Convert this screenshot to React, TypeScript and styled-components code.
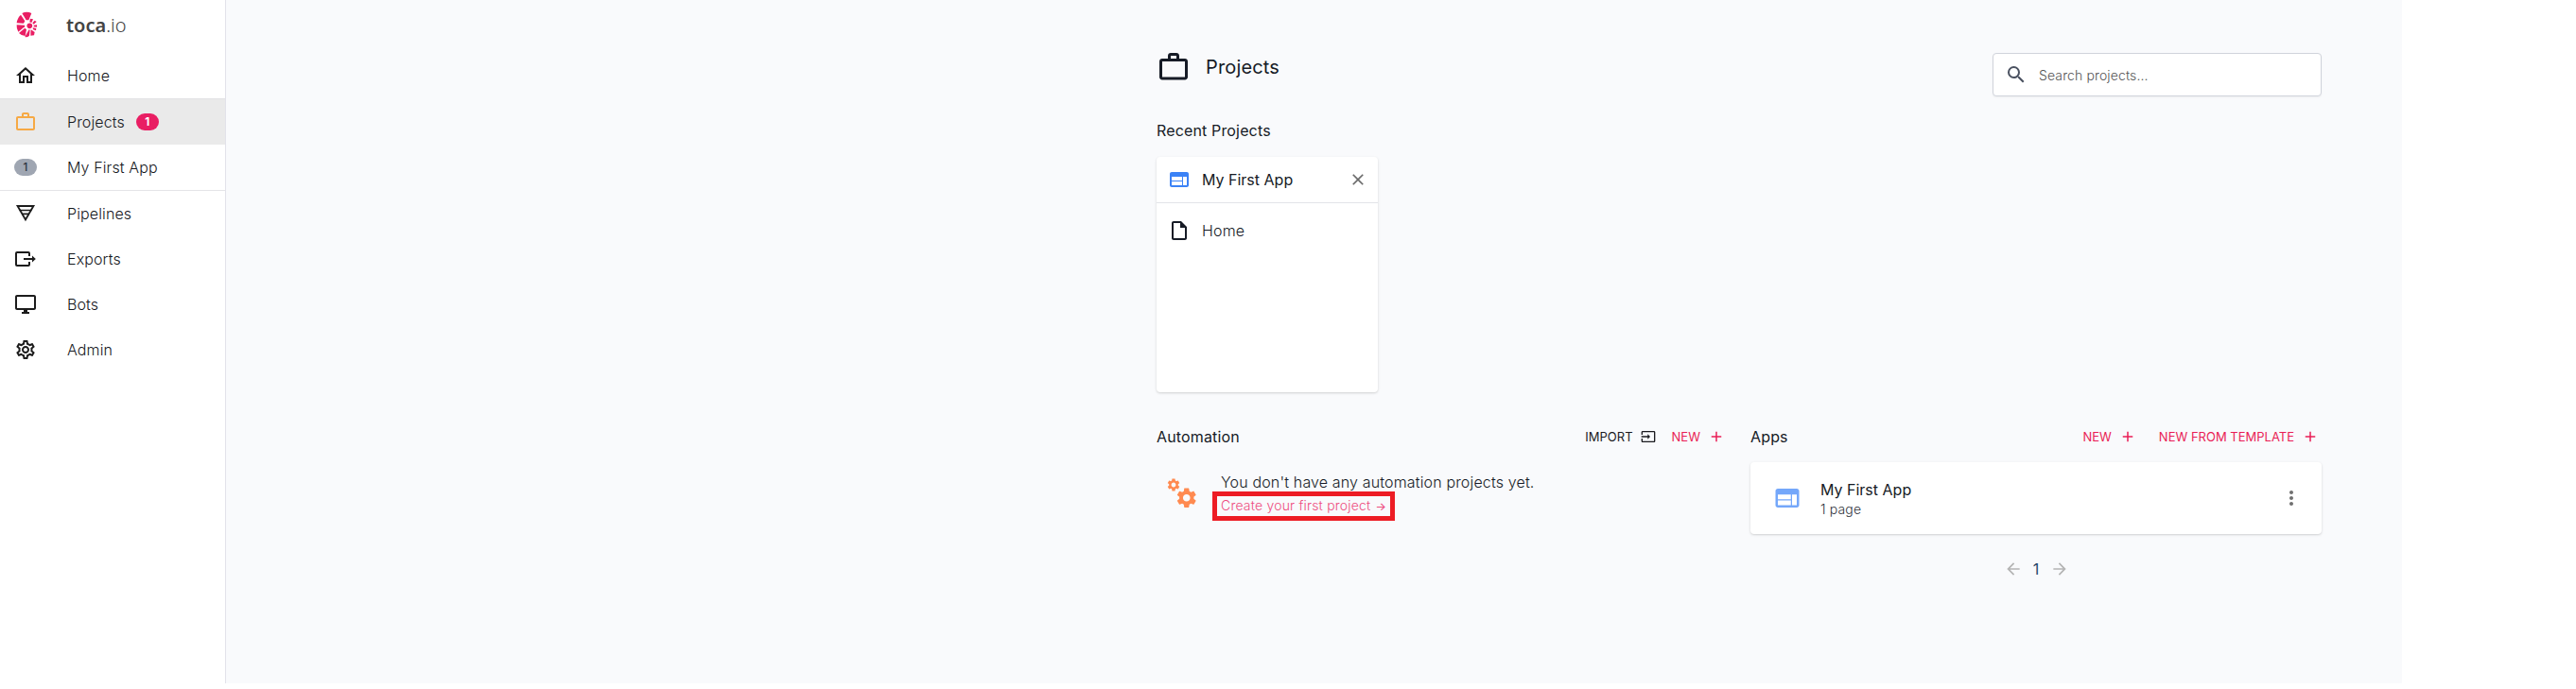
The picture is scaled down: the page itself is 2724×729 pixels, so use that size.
import React from "react";
import styled, { createGlobalStyle } from "styled-components";
import {
  MdAdd,
  MdArrowBack,
  MdArrowForward,
  MdClose,
  MdInput,
  MdMoreVert,
  MdOutlineDesktopWindows,
  MdOutlineInsertDriveFile,
  MdOutlineSettings,
  MdSearch,
  MdSettings,
  MdWeb,
  MdWorkOutline,
} from "react-icons/md";

const GlobalStyle = createGlobalStyle`
  *, *::before, *::after { box-sizing: border-box; }
  body {
    margin: 0;
    background: #fff;
    color: #161b26;
    font-family: "Inter", "Liberation Sans", sans-serif;
    font-size: 16px;
    line-height: 24px;
    letter-spacing: 0.15px;
  }
  svg { display: block; flex: none; }
`;

const Shell = styled.div`
  display: flex;
  width: 2540px;
  height: 723px;
  background: #f9fafc;
`;

const Sidebar = styled.nav`
  flex: none;
  width: 239px;
  background: #fff;
  border-right: 1px solid #e2e2ea;
`;

const Brand = styled.div`
  display: flex;
  align-items: center;
  height: 56px;
  padding-left: 16px;
`;

const BrandName = styled.div`
  margin-left: 30px;
  padding-bottom: 2px;
  font-family: "Noto Sans", "Open Sans", sans-serif;
  font-size: 20px;
  font-weight: 300;
  letter-spacing: 0;
  color: #444;

  b { font-weight: 600; }
`;

const NavItem = styled.div<{ $active?: boolean; $divided?: boolean }>`
  display: flex;
  align-items: center;
  height: ${(p) => (p.$active || p.$divided ? 49 : 48)}px;
  padding-left: 15px;
  font-weight: 300;
  letter-spacing: 0.12px;
  color: #16181d;
  background: ${(p) => (p.$active ? "#eaeaea" : "transparent")};
  border-top: ${(p) => (p.$active ? "1px solid #e2e2e4" : "0")};
  border-bottom: ${(p) => (p.$divided ? "1px solid #e4e4e8" : "0")};
`;

const NavIcon = styled.span<{ $color?: string }>`
  display: flex;
  justify-content: center;
  width: 24px;
  margin-right: 32px;
  color: ${(p) => p.$color ?? "#1c1c1c"};
`;

const Badge = styled.span<{ $muted?: boolean }>`
  flex: none;
  width: 24px;
  height: 18px;
  border-radius: 9px;
  background: ${(p) => (p.$muted ? "#9fa6b2" : "#e91e63")};
  color: ${(p) => (p.$muted ? "#2e3440" : "#fff")};
  font-size: 11.5px;
  font-weight: ${(p) => (p.$muted ? 500 : 700)};
  line-height: 19px;
  letter-spacing: 0;
  text-align: center;
`;

const NavBadge = styled(Badge)`
  margin-left: 12px;
`;

const Main = styled.main`
  flex: 1;
  padding: 53px 85px 0 984px;
`;

const PageHeader = styled.header`
  display: flex;
  justify-content: space-between;
  align-items: flex-start;
  height: 73px;
`;

const PageTitle = styled.h1`
  display: flex;
  align-items: center;
  gap: 16px;
  height: 36px;
  margin: 0;
  font-size: 20px;
  font-weight: 400;
`;

const SearchBox = styled.label`
  display: flex;
  align-items: center;
  width: 348px;
  height: 46px;
  margin: 3px 0 0;
  padding-left: 12px;
  background: #fff;
  border: 1px solid #d0d3db;
  border-radius: 4px;
  box-shadow: 0 1px 2px rgba(0, 0, 0, 0.05);
  color: #4a5160;
`;

const SearchInput = styled.input`
  flex: 1;
  margin-left: 12px;
  padding: 0;
  border: 0;
  outline: 0;
  background: none;
  font: 300 14px "Inter", sans-serif;
  letter-spacing: 0.12px;

  &::placeholder { color: #555; opacity: 1; }
`;

const SectionTitle = styled.h2`
  margin: 0;
  font-size: 16px;
  font-weight: 400;
  line-height: 24px;
`;

const Card = styled.article`
  background: #fff;
  border-radius: 4px;
  box-shadow: 0 1px 3px rgba(0, 0, 0, 0.12), 0 1px 2px rgba(0, 0, 0, 0.06);
`;

const RecentCard = styled(Card)`
  width: 234px;
  height: 249px;
  margin: 16px 0 35px;
`;

const RecentHead = styled.div`
  display: flex;
  align-items: center;
  height: 49px;
  padding: 0 11px 0 12px;
  border-bottom: 1px solid #e2e4e8;
`;

const RecentName = styled.span`
  flex: 1;
  margin-left: 12px;
  letter-spacing: 0;
`;

const RecentPage = styled.div`
  display: flex;
  align-items: center;
  gap: 12px;
  height: 57px;
  padding-left: 12px;
  font-weight: 300;
`;

const Tint = styled.span<{ $color: string }>`
  display: flex;
  color: ${(p) => p.$color};
`;

const Columns = styled.div`
  display: grid;
  grid-template-columns: 604px 604px;
  gap: 24px;
`;

const ColumnHead = styled.div`
  display: flex;
  justify-content: space-between;
  align-items: center;
  height: 24px;
  padding-right: 3px;
`;

const Actions = styled.div<{ $gap: number }>`
  display: flex;
  gap: ${(p) => p.$gap}px;
`;

const ActionButton = styled.button<{ $accent?: boolean }>`
  display: flex;
  align-items: center;
  gap: 8px;
  padding: 0;
  border: 0;
  background: none;
  font: 400 13px/24px "Inter", sans-serif;
  letter-spacing: 0;
  color: ${(p) => (p.$accent ? "#e91e56" : "#1b1b1f")};
`;

const EmptyState = styled.div`
  display: flex;
  padding: 24px 0 0 11px;
`;

const CogsSlot = styled.div`
  width: 32px;
  height: 32px;
  margin-top: 8px;
`;

const EmptyText = styled.div`
  margin-left: 25px;
  font-weight: 300;
`;

const CreateLine = styled.div`
  position: relative;
  width: max-content;
  margin-top: 1px;
`;

const CreateLink = styled.a`
  display: block;
  font-size: 14px;
  letter-spacing: 0.2px;
  color: #ee4d80;
  white-space: nowrap;
`;

const Arrow = styled.span`
  margin-left: 1px;
  font-size: 12px;
  font-weight: 500;
`;

const Highlight = styled.span`
  position: absolute;
  top: -3px;
  left: -9px;
  width: 193px;
  height: 31px;
  border: 5px solid #ed1c24;
`;

const AppCard = styled(Card)`
  display: flex;
  align-items: center;
  height: 76px;
  margin-top: 15px;
  padding: 0 20px 0 24px;
`;

const AppInfo = styled.div`
  flex: 1;
  margin-left: 20px;
  padding-bottom: 1px;
  letter-spacing: 0;
`;

const AppMeta = styled.div`
  font-size: 14px;
  font-weight: 300;
  line-height: 18px;
  letter-spacing: 0.15px;
  color: #30343c;
`;

const Pagination = styled.div`
  display: flex;
  justify-content: center;
  align-items: center;
  gap: 5px;
  margin-top: 25px;
  color: #b4b4b4;
`;

const PageNumber = styled.span`
  width: 19px;
  text-align: center;
  color: #24466a;
`;

const LogoMark = styled.svg`
  margin-top: -2px;
`;

const Logo = () => (
  <LogoMark width="24" height="30" viewBox="0 0 72 90" fill="#e91e63">
    <path d="M22 6Q37 -2 52 6L43 28H35Z" />
    <path d="M18 11L31 31L27 38L5 37Q7 20 18 11Z" />
    <path d="M5 43L31 44L30 49L10 65Q4 55 5 43Z" />
    <path d="M12 69L31 53L36 58L32 78Q19 77 12 69Z" />
    <path d="M44 58L47 59L45 77Q38 84 31 81Z" />
    <path d="M50 58L62 66L60 76L49 77Z" />
    <path d="M56 52L67 54L66 61L57 58Z" />
    <path d="M59 44L69 43V50L59 49Z" />
    <path d="M55 37L62 29L68 33L59 41Z" />
    <path d="M46 34L48 23L57 25L52 36Z" />
    <circle cx="46" cy="46" r="8.5" />
  </LogoMark>
);

const HomeIcon = () => (
  <svg width="24" height="24" viewBox="0 0 24 24" fill="currentColor">
    <path d="M12 5.69l5 4.5V18h-2v-6H9v6H7v-7.81l5-4.5M12 3L2 12h3v8h6v-6h2v6h6v-8h3L12 3z" />
  </svg>
);

const PipelinesIcon = () => (
  <svg width="24" height="24" viewBox="0 0 24 24" fill="none" stroke="currentColor">
    <path d="M3.6 4H20.4L12 18.4Z" strokeWidth="1.9" />
    <path d="M5.5 8.5H18.5M8 12.4H16" strokeWidth="1.6" />
  </svg>
);

const ExportsIcon = () => (
  <svg width="24" height="24" viewBox="0 0 24 24" fill="none" stroke="currentColor" strokeWidth="2">
    <path d="M16 9V6Q16 5 15 5H3Q2 5 2 6V18Q2 19 3 19H15Q16 19 16 18V15" />
    <path d="M10 12H20" />
    <path d="M19 8.6L22.8 12L19 15.4Z" fill="currentColor" stroke="none" />
  </svg>
);

const CogsIcon = () => (
  <svg width="32" height="32" viewBox="0 0 32 32">
    <MdSettings x={-1} y={-1} size={16} color="#ff8a50" />
    <MdSettings x={8} y={8} size={25.5} color="#ff8a50" />
  </svg>
);

export default function App() {
  return (
    <>
      <GlobalStyle />
      <Shell>
        <Sidebar>
          <Brand>
            <Logo />
            <BrandName><b>toca</b>.io</BrandName>
          </Brand>
          <NavItem><NavIcon><HomeIcon /></NavIcon>Home</NavItem>
          <NavItem $active>
            <NavIcon $color="#f6a945"><MdWorkOutline size={24} /></NavIcon>
            Projects<NavBadge>1</NavBadge>
          </NavItem>
          <NavItem $divided><NavIcon><Badge $muted>1</Badge></NavIcon>My First App</NavItem>
          <NavItem><NavIcon><PipelinesIcon /></NavIcon>Pipelines</NavItem>
          <NavItem><NavIcon><ExportsIcon /></NavIcon>Exports</NavItem>
          <NavItem><NavIcon><MdOutlineDesktopWindows size={24} /></NavIcon>Bots</NavItem>
          <NavItem><NavIcon><MdOutlineSettings size={24} /></NavIcon>Admin</NavItem>
        </Sidebar>
        <Main>
          <PageHeader>
            <PageTitle><MdWorkOutline size={36} />Projects</PageTitle>
            <SearchBox>
              <MdSearch size={24} />
              <SearchInput placeholder="Search projects..." />
            </SearchBox>
          </PageHeader>
          <SectionTitle>Recent Projects</SectionTitle>
          <RecentCard>
            <RecentHead>
              <Tint $color="#3b82f6"><MdWeb size={24} /></Tint>
              <RecentName>My First App</RecentName>
              <Tint $color="#6a6a6a"><MdClose size={20} /></Tint>
            </RecentHead>
            <RecentPage><MdOutlineInsertDriveFile size={24} />Home</RecentPage>
          </RecentCard>
          <Columns>
            <section>
              <ColumnHead>
                <SectionTitle>Automation</SectionTitle>
                <Actions $gap={17}>
                  <ActionButton>IMPORT<MdInput size={16} /></ActionButton>
                  <ActionButton $accent>NEW<MdAdd size={18} /></ActionButton>
                </Actions>
              </ColumnHead>
              <EmptyState>
                <CogsSlot><CogsIcon /></CogsSlot>
                <EmptyText>
                  You don't have any automation projects yet.
                  <CreateLine>
                    <CreateLink>Create your first project <Arrow>→</Arrow></CreateLink>
                    <Highlight />
                  </CreateLine>
                </EmptyText>
              </EmptyState>
            </section>
            <section>
              <ColumnHead>
                <SectionTitle>Apps</SectionTitle>
                <Actions $gap={24}>
                  <ActionButton $accent>NEW<MdAdd size={18} /></ActionButton>
                  <ActionButton $accent>NEW FROM TEMPLATE<MdAdd size={18} /></ActionButton>
                </Actions>
              </ColumnHead>
              <AppCard>
                <Tint $color="#74a7fa"><MdWeb size={30} /></Tint>
                <AppInfo>
                  My First App
                  <AppMeta>1 page</AppMeta>
                </AppInfo>
                <Tint $color="#707070"><MdMoreVert size={24} /></Tint>
              </AppCard>
              <Pagination>
                <MdArrowBack size={20} />
                <PageNumber>1</PageNumber>
                <MdArrowForward size={20} />
              </Pagination>
            </section>
          </Columns>
        </Main>
      </Shell>
    </>
  );
}
